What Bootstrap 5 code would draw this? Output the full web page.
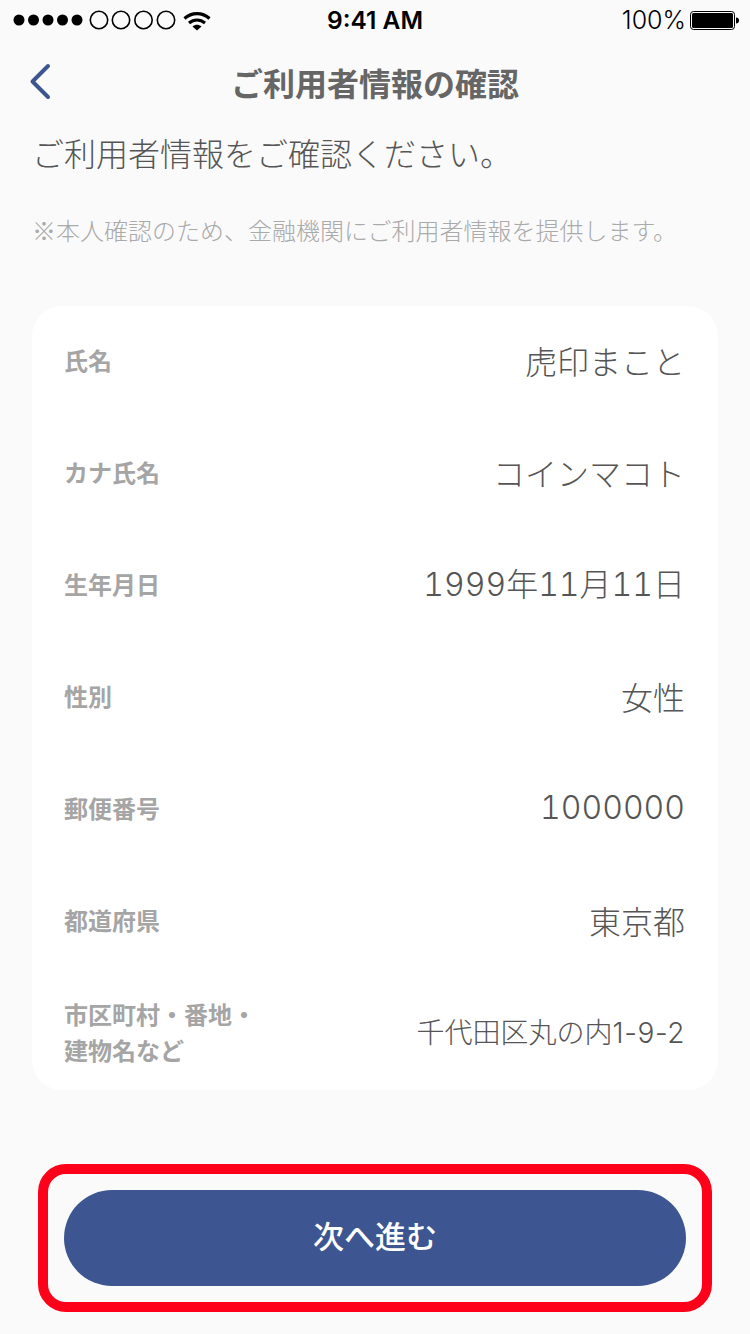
<!DOCTYPE html>
<html lang="ja">
<head>
    <meta charset="UTF-8">
    <meta name="viewport" content="width=device-width, initial-scale=1.0">
    <title>ご利用者情報の確認</title>
    <link href="https://cdn.jsdelivr.net/npm/bootstrap@5.3.0/dist/css/bootstrap.min.css" rel="stylesheet">
    <style>
        body {
            background: #fafafa;
            font-family: "Noto Sans CJK JP", "Liberation Sans", sans-serif;
            color: #555;
            width: 750px;
            height: 1334px;
            overflow: hidden;
        }
        .status-bar {
            height: 40px;
            padding-right: 10px;
            color: #000;
            font-family: Inter, sans-serif;
        }
        .status-side { width: 290px; }
        .status-side-right { width: 280px; padding-top: 1px; }
        .status-time { font-weight: 600; font-size: 24.5px; padding-top: 1px; }
        .status-pct { font-weight: 300; font-size: 25px; padding-top: 1px; }
        .nav-head { height: 84px; }
        .nav-head h1 {
            font-size: 32px;
            font-weight: 700;
            color: #666;
            margin: 0;
            line-height: 46px;
        }
        .nav-back { left: 29px; top: 23px; }
        .intro-text { font-size: 32px; font-weight: 300; line-height: 46px; margin: 5px 0 0 32px; }
        .intro-note { font-size: 24px; font-weight: 300; color: #aaa; margin: 37px 0 0 32px; line-height: 36px; }
        .info-panel {
            margin: 58px 32px 0;
            background: #fff;
            border-radius: 30px;
            padding: 0 33px 0 32px;
        }
        .info-row { height: 112px; padding-bottom: 5px; }
        .info-label { font-size: 24px; font-weight: 700; color: #a5a5a5; line-height: 36px; }
        .info-value { font-size: 32px; font-weight: 300; color: #555; }
        .info-value-sm { font-size: 28px; }
        .info-num { font-family: Inter, sans-serif; font-variant-numeric: tabular-nums; }
        .info-addr-num { font-family: Inter, sans-serif; letter-spacing: .6px; }
        .next-frame {
            margin: 74px 38px 0;
            height: 148px;
            border: 10px solid #ff001a;
            border-radius: 28px;
            padding: 16px;
        }
        .next-btn {
            height: 96px;
            border-radius: 48px;
            background: #3d5691;
            color: #fff;
            font-size: 31px;
            font-weight: 500;
            border: 0;
            padding: 0 0 6px;
        }
        .next-btn:hover { background: #3d5691; color: #fff; }
    </style>
</head>
<body>
    <div class="status-bar d-flex align-items-center justify-content-between">
        <div class="status-side d-flex align-items-center">
            <svg width="212" height="40" viewBox="0 0 212 40">
                <circle cx="19" cy="20" r="5.5"/><circle cx="33.500" cy="20" r="5.5"/><circle cx="48" cy="20" r="5.5"/><circle cx="62.500" cy="20" r="5.5"/><circle cx="77" cy="20" r="5.5"/>
                <g fill="none" stroke="#000" stroke-width="1.6">
                    <circle cx="99" cy="20" r="8.700"/><circle cx="121" cy="20" r="8.700"/><circle cx="143.500" cy="20" r="8.700"/><circle cx="166" cy="20" r="8.700"/>
                </g>
                <g fill="none" stroke="#000" stroke-width="3.200">
                    <path d="M184.500 18.500c7.200-6.600 17.800-6.600 25 0"/>
                    <path d="M189 23c4.800-4 11.200-4 16 0"/>
                </g>
                <path d="M192.500 26.500c2.800-2.200 6.200-2.200 9 0L197 30.500z"/>
            </svg>
        </div>
        <div class="status-time">9:41 AM</div>
        <div class="status-side-right d-flex align-items-center justify-content-end gap-1">
            <span class="status-pct">100%</span>
            <svg width="50" height="20" viewBox="0 0 50 20">
                <rect x=".5" y=".5" width="44" height="18" rx="3" fill="none" stroke="#000"/>
                <rect x="2" y="2" width="41" height="15" rx="1.500"/>
                <path d="M46 6.500c2 0 3 1 3 3s-1 3-3 3z"/>
            </svg>
        </div>
    </div>
    <div class="nav-head position-relative d-flex align-items-center justify-content-center">
        <svg class="nav-back position-absolute" width="24" height="38" viewBox="0 0 24 38">
            <path d="M19 3 3.500 18.500 19 34" fill="none" stroke="#3d5691" stroke-width="4" stroke-linecap="round" stroke-linejoin="round"/>
        </svg>
        <h1>ご利用者情報の確認</h1>
    </div>
    <p class="intro-text">ご利用者情報をご確認ください。</p>
    <p class="intro-note mb-0">※本人確認のため、金融機関にご利用者情報を提供します。</p>
    <div class="info-panel">
        <div class="info-row d-flex align-items-center justify-content-between"><span class="info-label">氏名</span><span class="info-value">虎印まこと</span></div>
        <div class="info-row d-flex align-items-center justify-content-between"><span class="info-label">カナ氏名</span><span class="info-value">コインマコト</span></div>
        <div class="info-row d-flex align-items-center justify-content-between"><span class="info-label">生年月日</span><span class="info-value"><span class="info-num">1999</span>年<span class="info-num">11</span>月<span class="info-num">11</span>日</span></div>
        <div class="info-row d-flex align-items-center justify-content-between"><span class="info-label">性別</span><span class="info-value">女性</span></div>
        <div class="info-row d-flex align-items-center justify-content-between"><span class="info-label">郵便番号</span><span class="info-value info-num">1000000</span></div>
        <div class="info-row d-flex align-items-center justify-content-between"><span class="info-label">都道府県</span><span class="info-value">東京都</span></div>
        <div class="info-row d-flex align-items-center justify-content-between"><span class="info-label">市区町村・番地・<br>建物名など</span><span class="info-value info-value-sm">千代田区丸の内<span class="info-addr-num">1-9-2</span></span></div>
    </div>
    <div class="next-frame">
        <button type="button" class="btn next-btn w-100">次へ進む</button>
    </div>
    <script src="https://cdn.jsdelivr.net/npm/bootstrap@5.3.0/dist/js/bootstrap.bundle.min.js"></script>
</body>
</html>
